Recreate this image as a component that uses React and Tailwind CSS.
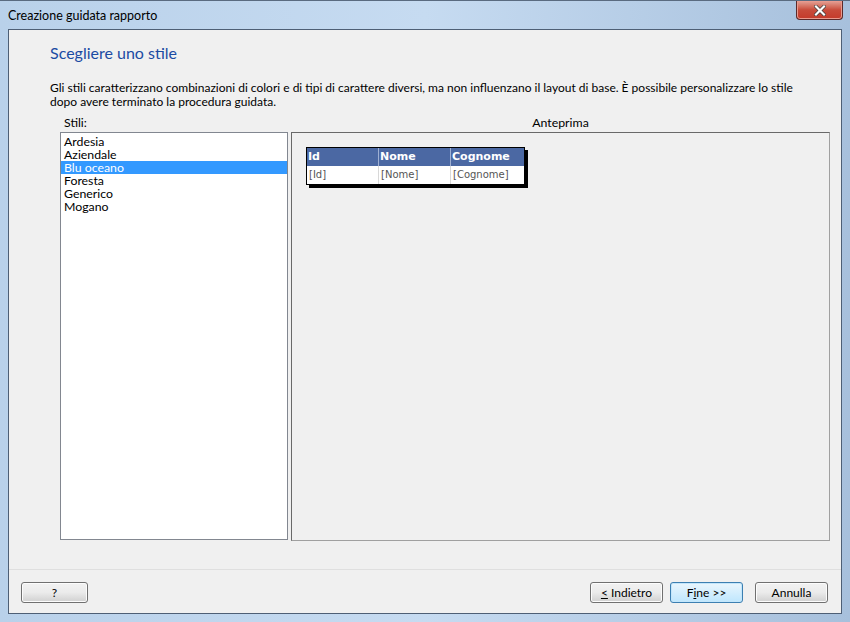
import React from 'react';

const font = { fontFamily: 'Lato, "Noto Sans", sans-serif' };

function WinButton({ children, focused, className = '' }) {
  return (
    <button
      className={
        'h-[21px] rounded-[3px] border text-[12px] leading-none text-black ' +
        (focused
          ? 'border-[#3c7fb1] bg-gradient-to-b from-[#eaf6fd] to-[#bee6fd] shadow-[inset_0_0_0_1px_#c3e6fb] '
          : 'border-[#707070] bg-gradient-to-b from-[#f2f2f2] via-[#ebebeb] to-[#d0d0d0] shadow-[inset_0_0_0_1px_#fcfcfc] ') +
        className
      }
    >
      {children}
    </button>
  );
}

const styles = ['Ardesia', 'Aziendale', 'Blu oceano', 'Foresta', 'Generico', 'Mogano'];

export default function App() {
  return (
    <div
      className="w-[850px] h-[622px] flex flex-col bg-gradient-to-r from-[#b9d1ea] via-[#c6dbf1] to-[#a7c0dc] border-t border-[#5a6b80]"
      style={font}
    >
      {/* title bar */}
      <div className="h-[28px] flex items-start justify-between">
        <div className="pl-[8px] pt-[7px] text-[12.5px] leading-[16px] text-black">Creazione guidata rapporto</div>
        <div className="mr-[7px] w-[47px] h-[19px] rounded-b-[4px] border border-t-0 border-[#5b2a2a] bg-gradient-to-b from-[#e3a196] via-[#c84b3a] to-[#c43a2a] flex items-center justify-center shadow-[inset_0_0_0_1px_#e99a8e]">
          <svg width="12" height="11" viewBox="0 0 12 11">
            <path d="M2 1.5 L10 9.5 M10 1.5 L2 9.5" stroke="#3b3b3b" strokeWidth="3.6" strokeLinecap="square" />
            <path d="M2 1.5 L10 9.5 M10 1.5 L2 9.5" stroke="#ffffff" strokeWidth="2.2" strokeLinecap="square" />
          </svg>
        </div>
      </div>

      {/* client area */}
      <div className="flex-1 mx-[8px] mb-[8px] border border-[#4e5f75] bg-[#f0f0f0] flex flex-col">
        <div className="pl-[41px] pr-[40px] pt-[13px]">
          <h1 className="text-[16px] leading-[20px] text-[#1b4ba3]">Scegliere uno stile</h1>
          <p className="mt-[18px] text-[12px] leading-[14px] text-black">
            Gli stili caratterizzano combinazioni di colori e di tipi di carattere diversi, ma non influenzano il layout di base. È possibile personalizzare lo stile dopo avere terminato la procedura guidata.
          </p>
        </div>

        <div className="flex mt-[6px] pl-[51px] pr-[11px] gap-[3px]">
          <div className="w-[228px] flex flex-col">
            <div className="pl-[4px] text-[12.3px] leading-[16px] text-black">Stili:</div>
            <div className="mt-[1px] h-[408px] border border-[#828790] bg-white pt-[2px]">
              {styles.map((s) => (
                <div
                  key={s}
                  className={
                    'h-[13px] pl-[3px] text-[12.3px] leading-[13px] ' +
                    (s === 'Blu oceano' ? 'bg-[#3399ff] text-white' : 'text-black')
                  }
                >
                  {s}
                </div>
              ))}
            </div>
          </div>

          <div className="flex-1 flex flex-col">
            <div className="text-center text-[12.3px] leading-[16px] text-black">Anteprima</div>
            <div className="mt-[1px] h-[409px] border border-[#a0a0a0] border-l-[#696969] border-t-[#696969] bg-[#f0f0f0] pt-[14px] pl-[14px]">
              <div className="w-[219px] border border-black bg-white shadow-[3px_3px_0_0_#000]" style={{ fontFamily: 'Tahoma, "DejaVu Sans", sans-serif' }}>
                <div className="flex h-[18px] bg-[#4b68a3] text-white text-[11px] font-bold leading-[18px]">
                  <div className="w-[72px] pl-[1px] border-r border-[#9fb0d3]">Id</div>
                  <div className="w-[72px] pl-[1px] border-r border-[#9fb0d3]">Nome</div>
                  <div className="flex-1 pl-[1px]">Cognome</div>
                </div>
                <div className="flex h-[18px] text-[10px] leading-[18px] text-[#555555]">
                  <div className="w-[72px] pl-[2px] border-r border-[#d8d8d8]">[Id]</div>
                  <div className="w-[72px] pl-[2px] border-r border-[#d8d8d8]">[Nome]</div>
                  <div className="flex-1 pl-[2px]">[Cognome]</div>
                </div>
              </div>
            </div>
          </div>
        </div>

        <div className="flex-1" />
        <div className="border-t border-[#dfdfdf]" />
        <div className="h-[43px] flex items-start pt-[12px] px-[12px]">
          <WinButton className="w-[67px]">?</WinButton>
          <div className="flex-1" />
          <WinButton className="w-[73px]">
            <span className="underline">&lt;</span> Indietro
          </WinButton>
          <WinButton focused className="w-[73px] ml-[7px]">
            F<span className="underline">i</span>ne &gt;&gt;
          </WinButton>
          <WinButton className="w-[73px] ml-[12px] mr-[1px]">Annulla</WinButton>
        </div>
      </div>
    </div>
  );
}
